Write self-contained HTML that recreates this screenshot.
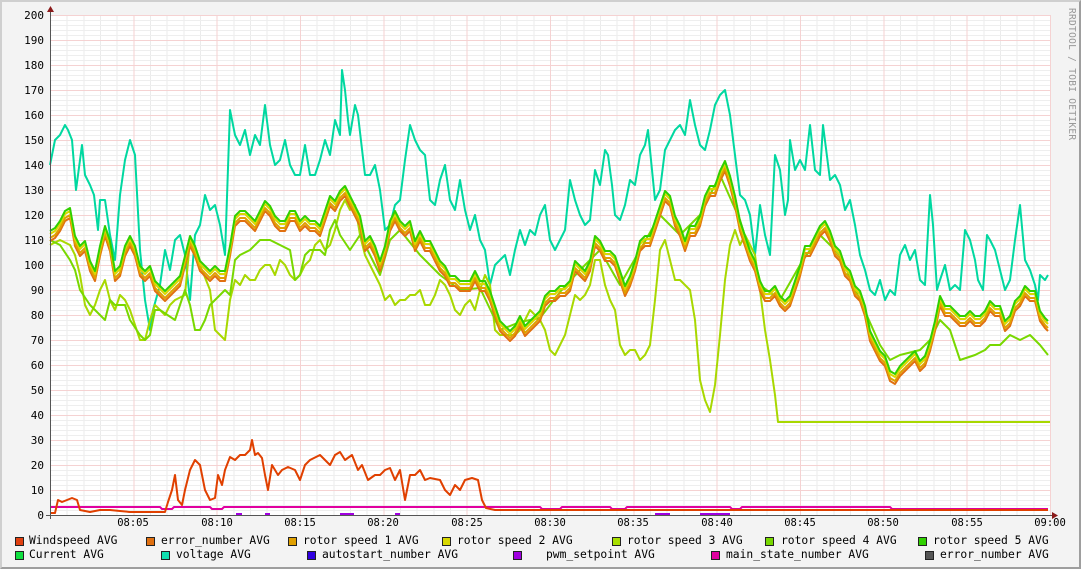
<!DOCTYPE html>
<html><head><meta charset="utf-8"><style>
html,body{margin:0;padding:0}
body{width:1081px;height:569px;position:relative;background:#f3f3f3;overflow:hidden;font-family:"DejaVu Sans Mono","Liberation Mono",monospace}
#frame{position:absolute;left:0;top:0;width:1081px;height:569px;box-sizing:border-box;border-top:2px solid #cfcfcf;border-left:2px solid #cfcfcf;border-right:2px solid #9e9e9e;border-bottom:2px solid #9e9e9e}
#plot{position:absolute;left:50px;top:15px;width:1001px;height:501px;background-color:#fff;
background-image:
repeating-linear-gradient(to bottom,#f5d2d2 0 1px,transparent 1px 25px),
repeating-linear-gradient(to right,#f5d2d2 0 1px,transparent 1px 83.333px),
repeating-linear-gradient(to bottom,#eeeeee 0 1px,transparent 1px 5px),
repeating-linear-gradient(to right,#ebebeb 0 1px,transparent 1px 16.667px);}
.yl{position:absolute;right:1037px;font-size:11px;color:#000;line-height:11px;text-align:right}
.xl{position:absolute;top:517px;font-size:10.5px;color:#000;width:40px;margin-left:-20px;text-align:center}
.lg{position:absolute;font-size:11.3px;color:#000;line-height:12px;white-space:pre}
.sq{position:absolute;width:7px;height:7px;border:1px solid #222}
#ttl{position:absolute;left:1066px;top:8px;writing-mode:vertical-rl;font-size:9.5px;color:#999;letter-spacing:0.3px}
</style></head><body>
<div id="frame"></div>
<div id="plot"></div>
<div id="ttl">RRDTOOL / TOBI OETIKER</div>

<div class="yl" style="top:10px">200</div>
<div class="yl" style="top:35px">190</div>
<div class="yl" style="top:60px">180</div>
<div class="yl" style="top:85px">170</div>
<div class="yl" style="top:110px">160</div>
<div class="yl" style="top:135px">150</div>
<div class="yl" style="top:160px">140</div>
<div class="yl" style="top:185px">130</div>
<div class="yl" style="top:210px">120</div>
<div class="yl" style="top:235px">110</div>
<div class="yl" style="top:260px">100</div>
<div class="yl" style="top:285px">90</div>
<div class="yl" style="top:310px">80</div>
<div class="yl" style="top:335px">70</div>
<div class="yl" style="top:360px">60</div>
<div class="yl" style="top:385px">50</div>
<div class="yl" style="top:410px">40</div>
<div class="yl" style="top:435px">30</div>
<div class="yl" style="top:460px">20</div>
<div class="yl" style="top:485px">10</div>
<div class="yl" style="top:510px">0</div>

<div class="xl" style="left:133px">08:05</div>
<div class="xl" style="left:217px">08:10</div>
<div class="xl" style="left:300px">08:15</div>
<div class="xl" style="left:383px">08:20</div>
<div class="xl" style="left:467px">08:25</div>
<div class="xl" style="left:550px">08:30</div>
<div class="xl" style="left:633px">08:35</div>
<div class="xl" style="left:717px">08:40</div>
<div class="xl" style="left:800px">08:45</div>
<div class="xl" style="left:883px">08:50</div>
<div class="xl" style="left:967px">08:55</div>
<div class="xl" style="left:1050px">09:00</div>

<svg style="position:absolute;left:0;top:0" width="1081" height="569" viewBox="0 0 1081 569">
<defs><polyline id="cp" points="50,235 55,232 60,225 65,215 70,212 75,240 80,250 85,245 90,265 95,275 100,250 105,230 110,245 115,275 120,270 125,250 130,240 135,250 140,270 145,275 150,270 155,285 160,290 165,295 170,290 175,285 180,280 185,260 190,240 195,250 200,265 205,270 210,275 215,270 220,275 225,275 230,250 235,220 240,215 245,215 250,220 255,225 260,215 265,205 270,210 275,220 280,225 285,225 290,215 295,215 300,225 305,220 310,225 315,225 320,230 325,215 330,200 335,205 340,195 345,190 350,200 355,210 360,220 365,245 370,240 375,250 380,265 385,250 390,225 395,215 400,225 405,230 410,225 415,245 420,235 425,245 430,245 435,255 440,265 445,270 450,280 455,280 460,285 465,285 470,285 475,275 480,285 485,285 490,295 495,310 500,325 505,330 510,335 515,330 520,320 525,330 530,325 535,320 540,315 545,300 550,295 555,295 560,290 565,290 570,285 575,265 580,270 585,275 590,265 595,240 600,245 605,255 610,255 615,260 620,275 625,290 630,280 635,265 640,245 645,240 650,240 655,225 660,210 665,195 670,200 675,220 680,230 685,245 690,230 695,230 700,220 705,200 710,190 715,190 720,175 725,165 730,180 735,200 740,225 745,240 750,255 755,265 760,285 765,295 770,295 775,290 780,300 785,305 790,300 795,285 800,270 805,250 810,250 815,240 820,230 825,225 830,235 835,250 840,255 845,270 850,275 855,290 860,295 865,310 870,335 875,345 880,355 885,360 890,375 895,378 900,370 905,365 910,360 915,355 920,365 925,360 930,345 935,325 940,300 945,310 950,310 955,315 960,320 965,320 970,315 975,320 980,320 985,315 990,305 995,310 1000,310 1005,325 1010,320 1015,305 1020,300 1025,290 1030,295 1035,295 1040,315 1045,322 1048,325"/></defs>
<g fill="none" stroke-width="2" stroke-linejoin="round">
<polyline stroke="#00d8a0" points="50,165 55,140 60,135 65,125 68,130 72,140 76,190 82,145 85,175 90,185 94,195 98,230 100,200 105,200 110,235 115,260 120,195 125,160 130,140 135,155 140,250 145,300 150,330 153,310 160,285 165,250 170,270 175,240 180,235 185,255 190,300 195,235 200,225 205,195 210,210 215,205 220,225 225,255 230,110 235,135 240,145 245,130 250,155 255,135 260,145 265,105 270,145 275,165 280,160 285,140 290,165 295,175 300,175 305,145 310,175 315,175 320,160 325,140 330,155 335,120 340,135 342,70 345,90 348,120 350,135 355,105 358,115 365,175 370,175 375,165 380,190 385,230 390,225 395,205 400,200 405,160 410,125 415,140 420,150 425,155 430,200 435,205 440,180 445,165 450,200 455,210 460,180 465,210 470,230 475,215 480,240 485,250 490,285 495,265 500,260 505,255 510,275 515,250 520,230 525,245 530,230 535,235 540,215 545,205 550,240 555,250 560,240 565,230 570,180 575,200 580,215 585,225 590,220 595,170 600,185 605,150 608,155 612,185 615,215 620,220 625,205 630,180 635,185 640,155 645,145 648,130 652,170 655,200 660,190 665,150 670,140 675,130 680,125 685,135 690,100 695,125 700,145 705,150 710,130 715,105 720,95 725,90 730,115 735,155 740,195 745,200 750,215 755,255 760,205 765,235 770,255 775,155 780,170 785,215 788,200 790,140 795,170 800,160 805,170 810,125 815,170 820,175 823,125 830,180 835,175 840,185 845,210 850,200 855,225 860,255 865,270 870,290 875,295 880,280 885,300 890,290 895,295 900,255 905,245 910,260 915,250 920,280 925,285 930,195 933,225 937,290 940,280 945,265 950,290 955,285 960,290 965,230 970,240 975,260 978,280 983,290 987,235 990,240 995,250 1000,270 1005,290 1010,280 1015,240 1020,205 1025,260 1030,270 1035,285 1038,300 1040,275 1045,280 1048,275"/>
<polyline stroke="#a8d800" points="50,245 60,240 70,245 75,255 80,275 85,305 90,315 95,305 100,290 105,280 110,300 115,310 120,295 125,300 130,310 135,325 140,340 145,340 150,320 155,305 160,310 165,315 170,305 175,300 185,295 190,240 195,250 200,265 210,290 215,330 220,335 225,340 230,300 235,280 240,285 245,275 250,280 255,280 260,270 265,265 270,265 275,275 280,260 285,265 290,275 295,280 300,275 305,265 310,260 315,245 320,240 325,250 330,245 335,230 340,210 345,200 350,210 355,205 360,235 365,255 370,265 380,285 385,300 390,295 395,305 400,300 405,300 410,295 415,295 420,290 425,305 430,305 435,295 440,280 445,285 450,295 455,310 460,315 465,305 470,300 475,310 480,290 485,275 490,285 495,330 500,335 505,335 510,335 515,335 520,330 525,320 530,310 535,315 540,320 545,330 550,350 555,355 560,345 565,335 570,315 575,295 580,300 585,295 590,285 595,260 600,260 605,285 610,300 615,310 620,345 625,355 630,350 635,350 640,360 645,355 650,345 655,300 660,250 665,240 670,260 675,280 680,280 685,285 690,290 695,320 700,380 705,400 710,412 715,385 720,335 725,280 730,245 735,230 740,245 745,235 750,245 755,255 760,290 765,330 770,360 775,395 778,422 1050,422"/>
<polyline stroke="#78d800" points="50,240 60,245 70,260 75,270 80,290 90,305 100,315 105,320 110,300 115,305 125,305 130,320 140,335 145,340 150,335 155,310 160,310 175,320 185,290 190,305 195,330 200,330 205,320 210,305 215,300 225,290 230,295 235,260 240,255 250,250 260,240 270,240 280,245 290,250 295,280 300,275 305,255 310,250 320,250 325,255 330,230 335,220 340,235 350,250 360,235 370,255 380,275 390,240 400,230 420,255 440,275 460,290 480,288 500,330 520,322 540,318 560,292 580,270 600,250 620,285 640,250 660,215 680,235 700,215 720,175 740,220 760,285 780,300 800,265 820,235 840,255 860,300 880,345 890,360 900,355 920,350 930,340 940,320 950,330 960,360 975,355 985,350 990,345 1000,345 1010,335 1020,340 1030,335 1040,345 1048,355"/>
<use href="#cp" stroke="#e07010" transform="translate(0,6)"/>
<use href="#cp" stroke="#e0a000" transform="translate(0,3)"/>
<use href="#cp" stroke="#d8d800" transform="translate(0,-1)"/>
<use href="#cp" stroke="#30d000" transform="translate(0,-4)"/>
<polyline stroke="#e000a0" points="50,507 160,507 162,509 172,509 174,507 210,507 212,509 222,509 224,507 540,507 542,509 560,509 562,507 610,507 612,509 625,509 627,507 730,507 732,509 740,509 742,507 890,507 892,509 1048,509"/>
<polyline stroke="#e04000" points="50,513 55,513 58,500 62,502 67,500 72,498 77,500 80,510 90,512 100,510 110,510 120,511 130,512 140,512 150,512 165,512 168,502 172,490 175,475 178,500 182,505 185,490 190,470 195,460 200,465 205,490 210,500 215,498 218,475 222,485 225,470 230,457 235,460 240,455 245,455 250,450 252,440 255,455 258,453 262,458 265,475 268,490 272,465 278,475 282,470 288,467 295,470 300,480 305,465 310,460 320,455 330,465 335,455 340,452 345,460 352,455 358,470 362,465 368,480 375,475 380,475 385,470 390,468 395,480 400,470 405,500 410,475 415,475 420,470 425,480 430,478 440,480 445,490 450,495 455,485 460,490 465,480 472,478 478,480 482,500 486,508 495,510 1048,510"/>
<g stroke="#a000e0" stroke-width="2"><line x1="236" y1="514" x2="242" y2="514"/><line x1="265" y1="514" x2="270" y2="514"/><line x1="340" y1="514" x2="354" y2="514"/><line x1="395" y1="514" x2="400" y2="514"/><line x1="655" y1="514" x2="670" y2="514"/><line x1="700" y1="514" x2="730" y2="514"/></g>
</g>
<g stroke="#555" stroke-width="1"><line x1="50.5" y1="12" x2="50.5" y2="519"/><line x1="46" y1="515.5" x2="1052" y2="515.5"/></g>
<polygon points="47,12 54,12 50.5,6" fill="#8b1a1a"/>
<polygon points="1052,512 1052,519 1058,515.5" fill="#8b1a1a"/>
</svg>

<div class="sq" style="left:15px;top:537px;background:#e04010"></div><div class="lg" style="left:29px;top:535px">Windspeed AVG</div>
<div class="sq" style="left:146px;top:537px;background:#e07010"></div><div class="lg" style="left:161px;top:535px">error_number AVG</div>
<div class="sq" style="left:288px;top:537px;background:#e0a000"></div><div class="lg" style="left:303px;top:535px">rotor speed 1 AVG</div>
<div class="sq" style="left:442px;top:537px;background:#d8d800"></div><div class="lg" style="left:457px;top:535px">rotor speed 2 AVG</div>
<div class="sq" style="left:612px;top:537px;background:#a8e000"></div><div class="lg" style="left:627px;top:535px">rotor speed 3 AVG</div>
<div class="sq" style="left:765px;top:537px;background:#78d800"></div><div class="lg" style="left:781px;top:535px">rotor speed 4 AVG</div>
<div class="sq" style="left:918px;top:537px;background:#30d000"></div><div class="lg" style="left:933px;top:535px">rotor speed 5 AVG</div>

<div class="sq" style="left:15px;top:551px;background:#10e040"></div><div class="lg" style="left:29px;top:549px">Current AVG</div>
<div class="sq" style="left:161px;top:551px;background:#10e0b0"></div><div class="lg" style="left:176px;top:549px">voltage AVG</div>
<div class="sq" style="left:307px;top:551px;background:#3000e0"></div><div class="lg" style="left:322px;top:549px">autostart_number AVG</div>
<div class="sq" style="left:513px;top:551px;background:#a000e0"></div><div class="lg" style="left:546px;top:549px">pwm_setpoint AVG</div>
<div class="sq" style="left:711px;top:551px;background:#e000a0"></div><div class="lg" style="left:726px;top:549px">main_state_number AVG</div>
<div class="sq" style="left:925px;top:551px;background:#555"></div><div class="lg" style="left:940px;top:549px">error_number AVG</div>
</body></html>
